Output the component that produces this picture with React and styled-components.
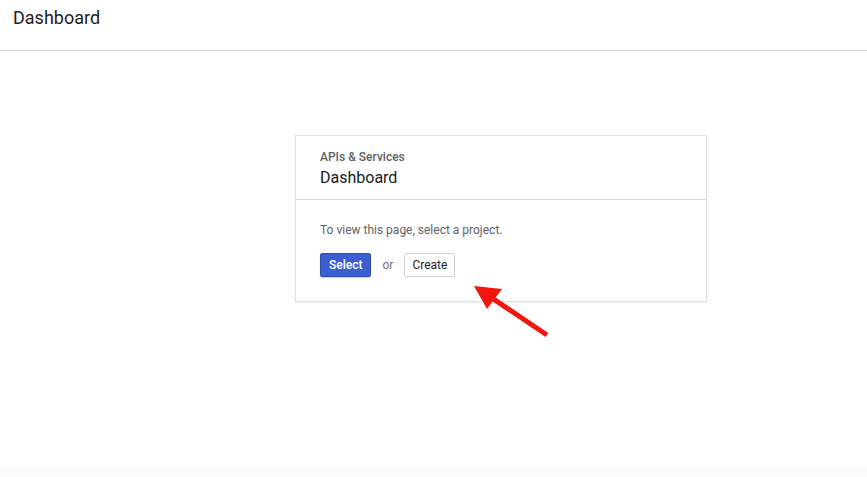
import styled, { createGlobalStyle } from 'styled-components';

const GlobalStyle = createGlobalStyle`
  html, body {
    margin: 0;
    padding: 0;
    background: #fff;
    font-family: Roboto, "Liberation Sans", Arial, sans-serif;
  }
`;

const Page = styled.div`
  position: relative;
  width: 867px;
  height: 477px;
  overflow: hidden;
  background: linear-gradient(to bottom, #fff 0, #fff 462px, #fafafa 477px);
`;

const TopBar = styled.header`
  height: 51px;
  box-sizing: border-box;
  border-bottom: 1px solid #d6d6d6;
  padding: 8px 13px 0;
  font-size: 18px;
  line-height: 20px;
  color: #202124;
`;

const Content = styled.main`
  display: flex;
  justify-content: flex-start;
  padding: 84px 0 0 295px;
`;

const Card = styled.section`
  width: 412px;
  box-sizing: border-box;
  background: #fff;
  border: 1px solid #e2e2e2;
  box-shadow: 0 1px 2px rgba(0, 0, 0, 0.08);
`;

const CardHeader = styled.div`
  padding: 13px 24px 10px;
  border-bottom: 1px solid #dadada;
`;

const Eyebrow = styled.div`
  font-size: 12px;
  line-height: 16px;
  color: #5f6368;
  font-weight: 500;
`;

const Title = styled.h2`
  margin: 2px 0 0;
  font-size: 16px;
  line-height: 22px;
  font-weight: 400;
  color: #202124;
`;

const CardBody = styled.div`
  padding: 22px 24px 24px;
`;

const Hint = styled.p`
  margin: 0 0 15px;
  font-size: 12px;
  line-height: 16px;
  color: #5f6368;
`;

const Actions = styled.div`
  display: flex;
  align-items: center;
  gap: 10px;
`;

const Button = styled.button`
  height: 24px;
  padding: 0 ${(p) => (p.$primary ? 8 : 7)}px;
  font-family: inherit;
  font-size: 12px;
  border-radius: 2px;
  cursor: pointer;
  font-weight: ${(p) => (p.$primary ? 500 : 400)};
  color: ${(p) => (p.$primary ? '#fff' : '#202124')};
  background: ${(p) => (p.$primary ? '#3b5fd0' : '#fff')};
  border: 1px solid ${(p) => (p.$primary ? '#2f4fb5' : '#d0d0d0')};
  box-shadow: ${(p) => (p.$primary ? '0 1px 1px rgba(0,0,0,0.2)' : 'none')};
`;

const Or = styled.span`
  font-size: 12px;
  color: #70757a;
  padding: 0 1px;
`;

const Arrow = styled.svg`
  position: absolute;
  left: 470px;
  top: 280px;
  pointer-events: none;
`;

export default function App() {
  return (
    <Page>
      <GlobalStyle />
      <TopBar>Dashboard</TopBar>
      <Content>
        <Card>
          <CardHeader>
            <Eyebrow>APIs &amp; Services</Eyebrow>
            <Title>Dashboard</Title>
          </CardHeader>
          <CardBody>
            <Hint>To view this page, select a project.</Hint>
            <Actions>
              <Button $primary>Select</Button>
              <Or>or</Or>
              <Button>Create</Button>
            </Actions>
          </CardBody>
        </Card>
      </Content>
      <Arrow width="90" height="64" viewBox="0 0 90 64">
        <line x1="77" y1="55" x2="16" y2="14" stroke="#f2160f" strokeWidth="5" />
        <polygon points="4,6 32,9 17,29" fill="#f2160f" />
      </Arrow>
    </Page>
  );
}
